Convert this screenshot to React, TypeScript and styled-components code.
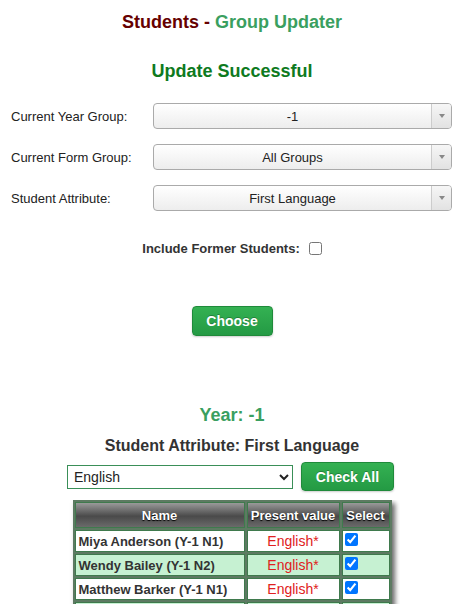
import React from "react";
import styled, { createGlobalStyle } from "styled-components";

const Global = createGlobalStyle`
  html, body { margin: 0; padding: 0; background: #fff; }
  body { font-family: "Liberation Sans", Arial, sans-serif; color: #333; }
`;

const Page = styled.div`
  width: 464px;
  display: flex;
  flex-direction: column;
  align-items: center;
  padding-top: 12px;
`;

const Title = styled.h1`
  margin: 0;
  font-size: 18px;
  line-height: 21px;
  font-weight: bold;
  text-align: center;
`;

const Maroon = styled.span`
  color: #660000;
`;

const Sea = styled.span`
  color: #3a9f60;
`;

const Success = styled.h2`
  margin: 28px 0 0;
  font-size: 18px;
  line-height: 20px;
  font-weight: bold;
  color: #0e7a1e;
`;

const Form = styled.div`
  align-self: stretch;
  display: grid;
  grid-template-columns: 142px 299px;
  row-gap: 15px;
  margin: 22px 0 0 11px;
  align-items: center;
`;

const Label = styled.label`
  font-size: 13px;
  color: #222;
`;

const SelectBox = styled.div`
  height: 24px;
  border: 1px solid #aaa;
  border-radius: 4px;
  background: linear-gradient(#ffffff, #ededed);
  display: flex;
  overflow: hidden;
  font-size: 13px;
  color: #222;
`;

const SelectText = styled.div`
  flex: 1;
  display: flex;
  align-items: center;
  justify-content: center;
`;

const SelectArrow = styled.div`
  width: 19px;
  border-left: 1px solid #ccc;
  background: linear-gradient(#f6f6f6, #e2e2e2);
  display: flex;
  align-items: center;
  justify-content: center;
  &::after {
    content: "";
    border-left: 3.5px solid transparent;
    border-right: 3.5px solid transparent;
    border-top: 4px solid #888;
  }
`;

const CheckRow = styled.div`
  margin-top: 30px;
  display: flex;
  align-items: center;
  gap: 9px;
  font-size: 13px;
  font-weight: bold;
  color: #333;
`;

const Box = styled.input`
  width: 13px;
  height: 13px;
  margin: 0;
`;

const GreenButton = styled.button<{ $w: number; $h: number }>`
  width: ${(p) => p.$w}px;
  height: ${(p) => p.$h}px;
  border: 1px solid #1f8a3a;
  border-radius: 4px;
  background: linear-gradient(#34b152, #249a44);
  color: #fff;
  font-family: "Liberation Sans", Arial, sans-serif;
  font-weight: bold;
  font-size: 14px;
  text-shadow: 0 -1px 0 rgba(0, 0, 0, 0.25);
  box-shadow: 0 1px 2px rgba(0, 0, 0, 0.2);
  padding: 0;
`;

const ChooseWrap = styled.div`
  margin-top: 50px;
  display: flex;
  justify-content: center;
`;

const Year = styled.h2`
  margin: 69px 0 0;
  font-size: 18px;
  line-height: 20px;
  font-weight: bold;
  color: #3a9f60;
`;

const Sub = styled.h3`
  margin: 11px 0 0;
  font-size: 16px;
  line-height: 19px;
  font-weight: bold;
  color: #333;
`;

const Toolbar = styled.div`
  margin-top: 7px;
  margin-right: 3px;
  display: flex;
  align-items: center;
  gap: 8px;
`;

const NativeSelect = styled.select`
  width: 226px;
  height: 24px;
  border: 1px solid #3a8f58;
  border-radius: 0;
  font-family: "Liberation Sans", Arial, sans-serif;
  font-size: 14px;
  color: #222;
  background: #fff;
  padding: 0 2px;
`;

const TableClip = styled.div`
  margin-top: 9px;
  padding: 0 8px;
  height: 104px;
  overflow: hidden;
`;

const Table = styled.table`
  width: 319px;
  table-layout: fixed;
  border-collapse: separate;
  border-spacing: 2px;
  background: #5d7a62;
  box-shadow: 3px 3px 5px rgba(0, 0, 0, 0.6);
  font-size: 13px;
`;

const Th = styled.th<{ $w: number }>`
  box-sizing: border-box;
  width: ${(p) => p.$w}px;
  height: 26px;
  padding: 0 2px;
  border: 1px solid #3f7a4d;
  background: linear-gradient(#9a9a9a, #4a4a4a 55%, #6a6a6a);
  color: #fff;
  font-weight: bold;
  text-shadow: 0 1px 1px #000;
  text-align: center;
  white-space: nowrap;
`;

const Tr = styled.tr<{ $alt: boolean }>`
  background: ${(p) => (p.$alt ? "#c6f1d2" : "#fff")};
`;

const Td = styled.td`
  box-sizing: border-box;
  height: 22px;
  padding: 0 3px;
  border: 1px solid #3f7a4d;
  white-space: nowrap;
`;

const NameTd = styled(Td)`
  font-weight: bold;
  color: #333;
`;

const ValueTd = styled(Td)`
  color: #e02020;
  font-size: 14px;
  text-align: center;
`;

const SelTd = styled(Td)`
  padding: 2px 2px 0;
  vertical-align: top;
`;

const rows = [
  "Miya Anderson (Y-1 N1)",
  "Wendy Bailey (Y-1 N2)",
  "Matthew Barker (Y-1 N1)",
  "Rhys Bennett (Y-1 N2)",
];

const selects: [string, string][] = [
  ["Current Year Group:", "-1"],
  ["Current Form Group:", "All Groups"],
  ["Student Attribute:", "First Language"],
];

export default function App() {
  return (
    <>
      <Global />
      <Page>
        <Title>
          <Maroon>Students - </Maroon>
          <Sea>Group Updater</Sea>
        </Title>
        <Success>Update Successful</Success>
        <Form>
          {selects.map(([l, v]) => (
            <React.Fragment key={l}>
              <Label>{l}</Label>
              <SelectBox>
                <SelectText>{v}</SelectText>
                <SelectArrow />
              </SelectBox>
            </React.Fragment>
          ))}
        </Form>
        <CheckRow>
          Include Former Students:
          <Box type="checkbox" />
        </CheckRow>
        <ChooseWrap>
          <GreenButton $w={81} $h={30}>Choose</GreenButton>
        </ChooseWrap>
        <Year>Year: -1</Year>
        <Sub>Student Attribute: First Language</Sub>
        <Toolbar>
          <NativeSelect defaultValue="English">
            <option>English</option>
          </NativeSelect>
          <GreenButton $w={93} $h={29}>Check All</GreenButton>
        </Toolbar>
        <TableClip>
          <Table>
            <thead>
              <tr>
                <Th $w={170}>Name</Th>
                <Th $w={93}>Present value</Th>
                <Th $w={48}>Select</Th>
              </tr>
            </thead>
            <tbody>
              {rows.map((r, i) => (
                <Tr key={r} $alt={i % 2 === 1}>
                  <NameTd>{r}</NameTd>
                  <ValueTd>English*</ValueTd>
                  <SelTd>
                    <Box type="checkbox" defaultChecked />
                  </SelTd>
                </Tr>
              ))}
            </tbody>
          </Table>
        </TableClip>
      </Page>
    </>
  );
}
